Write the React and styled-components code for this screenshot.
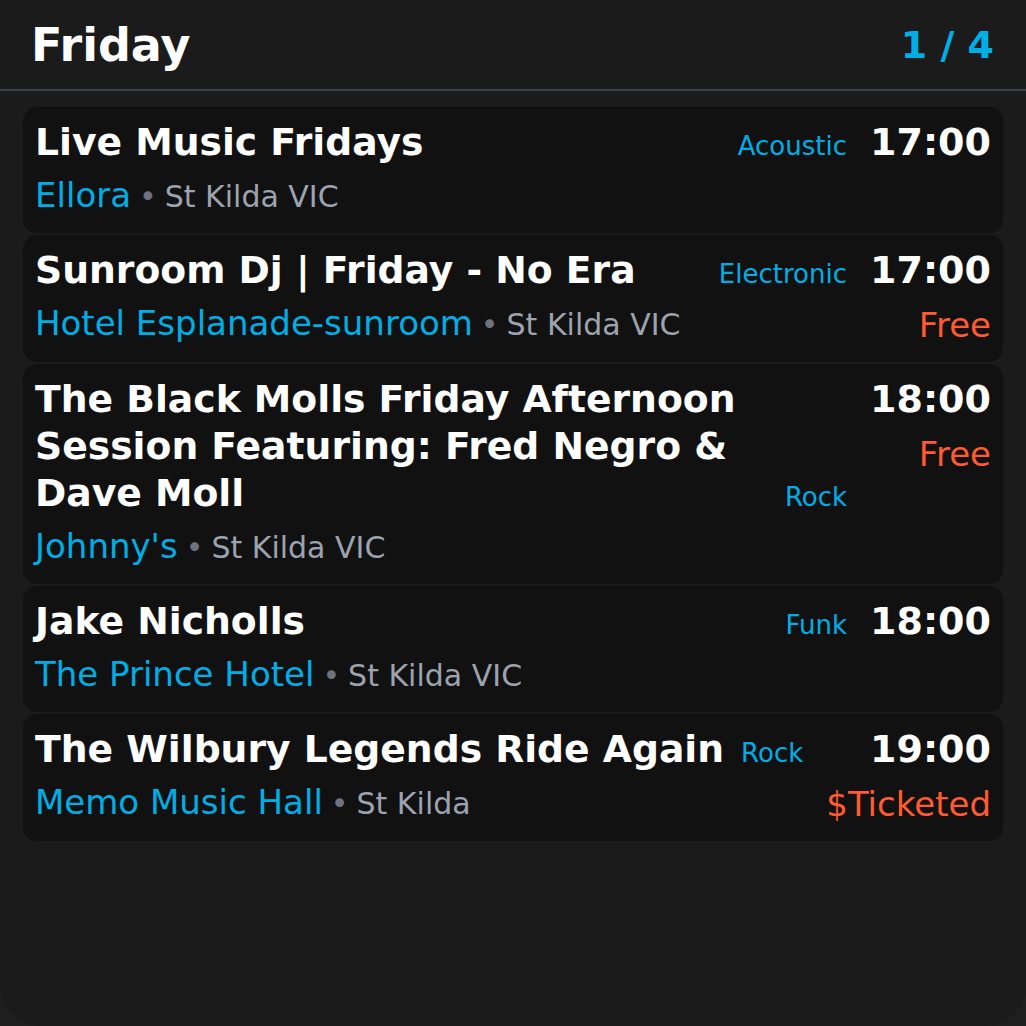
import React from 'react';
import styled, { createGlobalStyle } from 'styled-components';

const GlobalStyle = createGlobalStyle`
  html, body {
    margin: 0;
    padding: 0;
    background: #1f1f1f;
  }
  body {
    font-family: "DejaVu Sans", "Noto Sans", sans-serif;
  }
`;

const Screen = styled.div`
  width: 1026px;
  height: 1026px;
  box-sizing: border-box;
  background: #1b1b1b;
  border-radius: 0 0 40px 40px;
  display: flex;
  flex-direction: column;
  overflow: hidden;
`;

const Header = styled.div`
  display: flex;
  justify-content: space-between;
  align-items: center;
  height: 91px;
  padding: 0 32px 0 31px;
  border-bottom: 2px solid #3a404c;
  box-sizing: border-box;
  flex-shrink: 0;
`;

const DayTitle = styled.h1`
  margin: 0;
  font-size: 46px;
  font-weight: bold;
  color: #ffffff;
`;

const Pager = styled.span`
  font-size: 38px;
  font-weight: bold;
  color: #00aee6;
`;

const List = styled.div`
  display: flex;
  flex-direction: column;
  gap: 2px;
  padding: 16px 23px 0;
`;

const Card = styled.div`
  display: flex;
  gap: 23px;
  background: #111111;
  border-radius: 14px;
  padding: 12px 12px 15px;
`;

const Main = styled.div`
  flex: 1;
  min-width: 0;
  display: flex;
  flex-direction: column;
`;

const TopRow = styled.div`
  display: flex;
  align-items: flex-end;
  gap: 12px;
`;

const Title = styled.div`
  flex: 1;
  font-size: 37.7px;
  line-height: 47px;
  font-weight: bold;
  color: #ffffff;
`;

const Genre = styled.span`
  font-size: 26px;
  line-height: 39px;
  color: #00aee6;
  white-space: nowrap;
`;

const VenueLine = styled.div`
  margin-top: 6px;
  font-size: 34px;
  line-height: 46px;
  white-space: nowrap;
`;

const Venue = styled.span`
  color: #00aee6;
`;

const Dot = styled.span`
  font-size: 30px;
  line-height: 1;
  color: #6b7280;
  margin: 0 8px;
`;

const Place = styled.span`
  font-size: 30px;
  line-height: 1;
  color: #9ca3af;
`;

const Side = styled.div`
  display: flex;
  flex-direction: column;
  align-items: flex-end;
`;

const Time = styled.div`
  font-size: 38px;
  line-height: 47px;
  font-weight: bold;
  color: #ffffff;
`;

const Price = styled.div`
  margin-top: 10px;
  font-size: 34px;
  line-height: 43px;
  color: #ff5a32;
  white-space: nowrap;
`;

const events = [
  { title: 'Live Music Fridays', genre: 'Acoustic', venue: 'Ellora', place: 'St Kilda VIC', time: '17:00' },
  { title: 'Sunroom Dj | Friday - No Era', genre: 'Electronic', venue: 'Hotel Esplanade-sunroom', place: 'St Kilda VIC', time: '17:00', price: 'Free' },
  { title: 'The Black Molls Friday Afternoon Session Featuring: Fred Negro & Dave Moll', genre: 'Rock', venue: "Johnny's", place: 'St Kilda VIC', time: '18:00', price: 'Free' },
  { title: 'Jake Nicholls', genre: 'Funk', venue: 'The Prince Hotel', place: 'St Kilda VIC', time: '18:00' },
  { title: 'The Wilbury Legends Ride Again', genre: 'Rock', venue: 'Memo Music Hall', place: 'St Kilda', time: '19:00', price: '$Ticketed' },
];

export default function App() {
  return (
    <>
      <GlobalStyle />
      <Screen>
        <Header>
          <DayTitle>Friday</DayTitle>
          <Pager>1 / 4</Pager>
        </Header>
        <List>
          {events.map((e, i) => (
            <Card key={i}>
              <Main>
                <TopRow>
                  <Title>{e.title}</Title>
                  <Genre>{e.genre}</Genre>
                </TopRow>
                <VenueLine>
                  <Venue>{e.venue}</Venue>
                  <Dot>•</Dot>
                  <Place>{e.place}</Place>
                </VenueLine>
              </Main>
              <Side>
                <Time>{e.time}</Time>
                {e.price && <Price>{e.price}</Price>}
              </Side>
            </Card>
          ))}
        </List>
      </Screen>
    </>
  );
}
